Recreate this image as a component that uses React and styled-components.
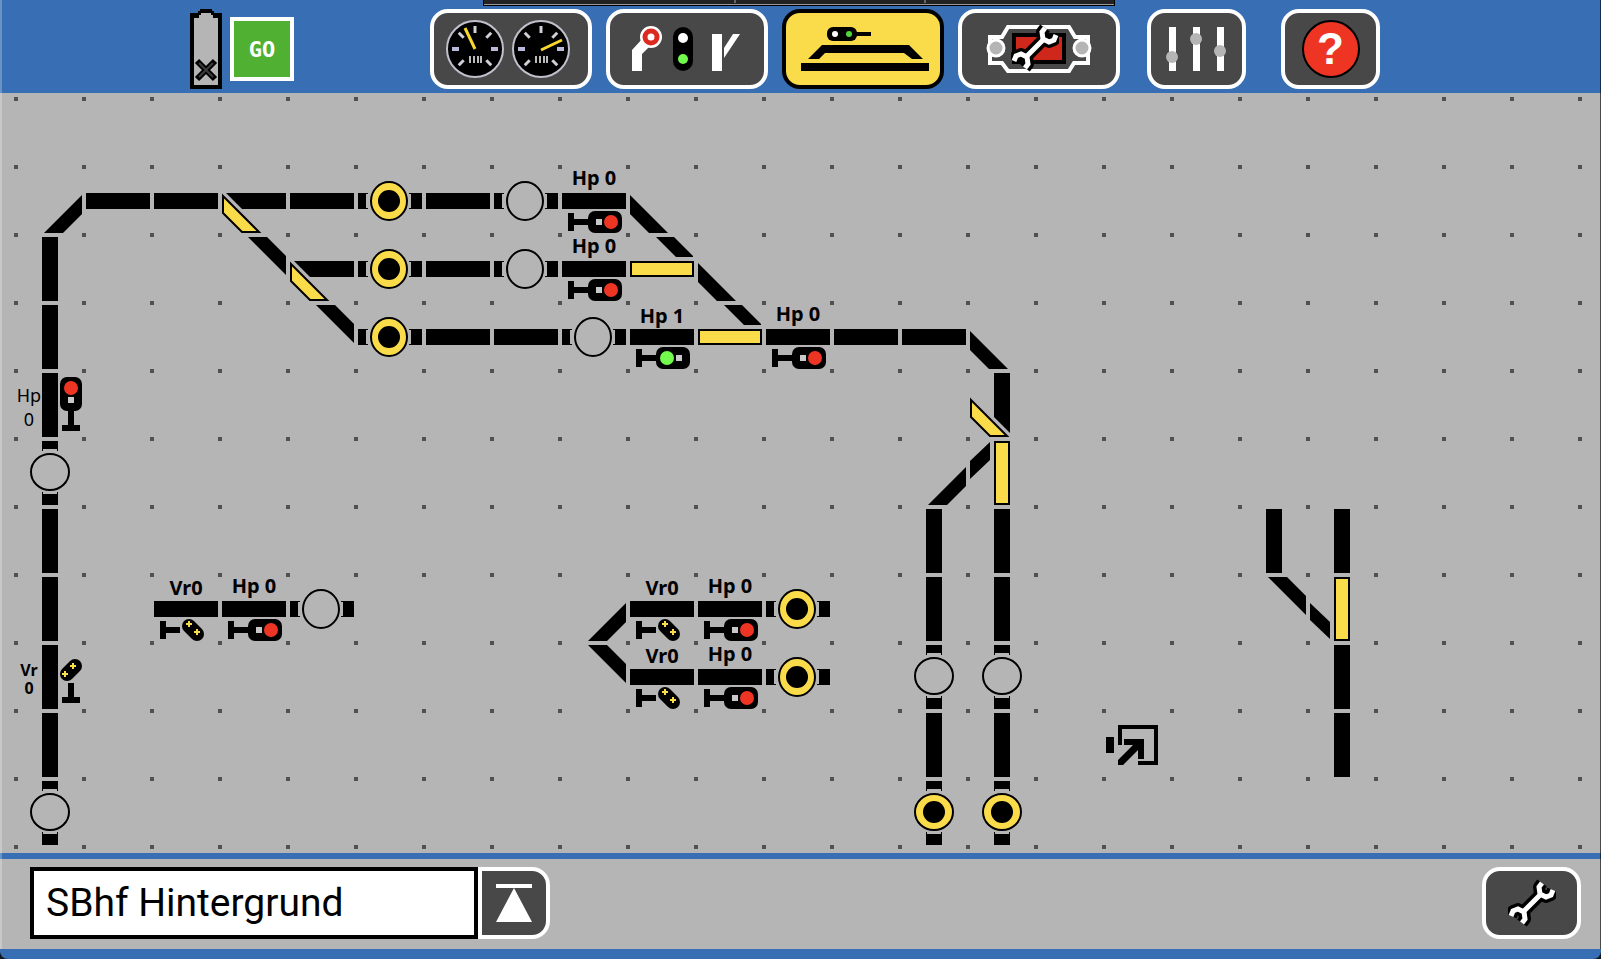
import React, { useState } from "react";
import styled, { createGlobalStyle, css } from "styled-components";

const BLUE = "#376eb4";
const GREY = "#b5b5b5";
const DARK = "#484848";
const YELLOW = "#fadb4a";
const RED = "#ee3524";
const GREEN = "#72fb4c";

const GlobalStyle = createGlobalStyle`
  * {
    box-sizing: border-box;
  }

  body {
    margin: 0;
    background: #14181e;
    font-family: "Noto Sans", sans-serif;
  }
`;

const Screen = styled.div`
  position: relative;
  display: flex;
  flex-direction: column;
  min-height: 100vh;
  overflow: hidden;
  background: ${GREY};
  border-bottom: 10px solid ${BLUE};
  border-radius: 0 0 8px 8px;

  &::after {
    content: "";
    position: absolute;
    inset: 0;
    border-left: 2px solid rgba(255, 255, 255, 0.25);
    border-right: 1px solid rgba(0, 0, 0, 0.6);
    pointer-events: none;
  }
`;

const TopBar = styled.header`
  display: flex;
  align-items: center;
  height: 93px;
  padding: 5px 0 0 190px;
  background: ${BLUE};
`;

const WindowEdge = styled.div`
  position: absolute;
  top: 0;
  left: 483px;
  display: flex;
  width: 632px;
  height: 6px;
  background: #222;
  border: 1px solid #000;
  border-top: none;
  box-shadow: inset 0 -1px 0 #999;
`;

const EdgePart = styled.span`
  flex: 0 0 ${({ $width }) => $width}px;
  height: 3px;
  border-right: 2px solid #666;
`;

const Status = styled.div`
  display: flex;
  align-items: center;
  gap: 8px;
  margin-right: 136px;
`;

const GoButton = styled.button`
  width: 64px;
  height: 64px;
  padding: 0;
  background: #50b031;
  border: 4px solid #fff;
  color: #fff;
  font-family: "DejaVu Sans Mono", monospace;
  font-size: 22px;
  font-weight: 700;
`;

const Tabs = styled.nav`
  display: flex;
  gap: 14px;
`;

const Tools = styled.div`
  display: flex;
  gap: 35px;
  margin-left: 27px;
`;

const IconButton = styled.button`
  display: flex;
  align-items: center;
  justify-content: center;
  width: ${({ $wide }) => ($wide ? 162 : 99)}px;
  height: ${({ $low }) => ($low ? 72 : 80)}px;
  padding: 0;
  background: ${DARK};
  border: 4px solid #fff;
  border-radius: 18px;
  cursor: pointer;

  ${({ $active }) =>
    $active &&
    css`
      background: ${YELLOW};
      border-color: #000;
    `}

  svg {
    display: block;
    flex: none;
  }
`;

const HelpMark = styled.span`
  display: flex;
  align-items: center;
  justify-content: center;
  width: 58px;
  height: 58px;
  background: ${RED};
  border: 2px solid #000;
  border-radius: 50%;
  color: #fff;
  font-size: 44px;
  font-weight: 600;
  line-height: 54px;
`;

// one grid cell is 68px, the dots sit on the cell corners
const Board = styled.main`
  display: grid;
  flex: 1;
  grid-template-columns: repeat(23, 68px);
  grid-auto-rows: 68px;
  padding: 6px 0 6px 16px;
  overflow: hidden;
  background: conic-gradient(from 270deg at 4px 4px, #505050 25%, transparent 0)
    14px 4px / 68px 68px ${GREY};
`;

const CellBox = styled.div`
  position: relative;
  grid-column: ${({ $col }) => $col + 1};
  grid-row: ${({ $row }) => $row + 1};

  svg {
    display: block;
  }
`;

const CellButton = styled(CellBox).attrs({ as: "button", type: "button" })`
  padding: 0;
  background: none;
  border: none;
  color: #000;
  cursor: pointer;
`;

const Label = styled.span`
  position: absolute;
  top: ${({ $low }) => ($low ? 2 : 0)}px;
  left: 0;
  width: 68px;
  font-family: "Noto Sans", sans-serif;
  font-size: 20px;
  font-weight: 700;
  line-height: 22px;
  text-align: center;
  white-space: nowrap;
`;

const SideLabel = styled.span`
  position: absolute;
  top: ${({ $bold }) => ($bold ? 18 : 12)}px;
  left: 0;
  width: 26px;
  font-family: "Noto Sans", sans-serif;
  font-size: ${({ $bold }) => ($bold ? 16 : 18)}px;
  font-weight: ${({ $bold }) => ($bold ? 700 : 400)};
  line-height: ${({ $bold }) => ($bold ? 18 : 24)}px;
  text-align: center;
`;

const BottomBar = styled.footer`
  display: flex;
  align-items: center;
  height: 96px;
  padding: 0 20px 2px 30px;
  border-top: 6px solid ${BLUE};
`;

const NameInput = styled.input`
  width: 448px;
  height: 72px;
  padding: 0 12px;
  background: #fff;
  border: 4px solid #000;
  border-radius: 0;
  color: #000;
  font-family: Roboto, sans-serif;
  font-size: 39px;
  outline: none;
`;

const UpButton = styled(IconButton)`
  width: 72px;
  border-radius: 0 18px 18px 0;
`;

const ToolButton = styled(IconButton)`
  margin-left: auto;
`;

const Wrench = ({ x, y, size = 48 }) => {
  const head = "M34 4L31 8L32 15L38 18L43 16L45 11";
  const foot = "M14 44L17 40L16 33L10 30L5 32L3 37";
  return (
    <svg x={x} y={y} width={size} height={size} viewBox="0 0 48 48" fill="none">
      <g stroke="#000" strokeWidth="12" strokeLinejoin="round">
        <path d="M33 15L15 33" />
        <path d={head} />
        <path d={foot} />
      </g>
      <g stroke="#fff" strokeWidth="5">
        <path d="M34 14L14 34" />
        <path d={head} />
        <path d={foot} />
      </g>
    </svg>
  );
};

const BatteryIcon = () => (
  <svg width="32" height="80" viewBox="0 0 32 80">
    <path d="M10 0H22V2H24V4H32V80H0V4H8V2H10Z" fill="#000" />
    <path d="M11 4H21V6H23V9H28V76H4V9H9V6H11Z" fill={GREY} />
    <path d="M7 52L25 70M25 52L7 70" stroke="#000" strokeWidth="6" />
    <path d="M9 54L23 68M23 54L9 68" stroke="#3c3c3c" strokeWidth="2" />
  </svg>
);

const Gauge = ({ x, needle }) => (
  <g transform={`translate(${x} 40)`}>
    <circle r="28" fill="#000" stroke="#c0c0cc" strokeWidth="2" />
    {[-135, -45, 0, 45, 135].map((angle) => (
      <path
        key={angle}
        d="M0 -23V-16"
        stroke="#cfcfd8"
        strokeWidth="3"
        transform={`rotate(${angle})`}
      />
    ))}
    <path d="M-23 0H-16M16 0H23" stroke="#b9b9dc" strokeWidth="4" />
    <path d="M-5 7V14M-1 7V14M3 7V14M6 7V14" stroke="#bbb" strokeWidth="2" />
    <path d={needle} stroke="#f8d82c" strokeWidth="3" />
  </g>
);

const GaugesIcon = () => (
  <svg width="154" height="72" viewBox="4 4 154 72">
    <Gauge x={45} needle="M0 0L-10 -21" />
    <Gauge x={111} needle="M0 1L21 -9" />
  </svg>
);

const SignalsIcon = () => (
  <svg width="154" height="72" viewBox="4 4 154 72">
    <path d="M26 62V41L38 28L45 36L36 45V62Z" fill="#fff" />
    <circle cx="45" cy="28" r="11" fill="#fff" />
    <circle cx="45" cy="28" r="6" fill="none" stroke="#dd2a20" strokeWidth="5" />
    <rect x="67" y="18" width="20" height="44" rx="10" fill="#000" />
    <circle cx="77" cy="29" r="5" fill="#fff" />
    <circle cx="77" cy="50" r="5" fill={GREEN} />
    <path d="M106 25H116V62H106ZM127 25H134L118 49V39Z" fill="#fff" />
  </svg>
);

const LayoutIcon = () => (
  <svg width="154" height="72" viewBox="4 4 154 72">
    <rect x="45" y="18" width="30" height="14" rx="6" fill="#000" />
    <path d="M74 25H89" stroke="#000" strokeWidth="4" />
    <circle cx="53" cy="25" r="3" fill="#fff" />
    <circle cx="67" cy="25" r="3" fill="#4fd63c" />
    <path d="M26 50L40 36H127L141 50H130L122 44H43L37 50Z" fill="#000" />
    <rect x="19" y="54" width="128" height="8" fill="#000" />
  </svg>
);

const LocoIcon = () => (
  <svg width="154" height="72" viewBox="4 4 154 72">
    <path
      d="M50 18H111L117 28H130V54H116L111 62H50L44 54H32V28H44Z"
      fill={DARK}
      stroke="#fff"
      strokeWidth="4"
    />
    <circle cx="38" cy="39" r="8" fill={GREY} stroke="#fff" strokeWidth="3" />
    <circle cx="124" cy="39" r="8" fill={GREY} stroke="#fff" strokeWidth="3" />
    <rect x="56" y="26" width="50" height="27" fill="#cf271c" stroke="#000" strokeWidth="4" />
    <Wrench x={53} y={15} />
  </svg>
);

const SlidersIcon = () => (
  <svg width="91" height="72" viewBox="4 4 91 72">
    <path d="M22 18H29V62H22ZM46 18H53V62H46ZM70 18H77V62H70Z" fill="#fff" />
    <circle cx="25" cy="48" r="6" fill={GREY} />
    <circle cx="49" cy="30" r="6" fill={GREY} />
    <circle cx="73" cy="42" r="6" fill={GREY} />
  </svg>
);

const TopIcon = () => (
  <svg width="36" height="38" viewBox="0 0 36 38">
    <path d="M0 0H36V4H0ZM18 4L36 38H0Z" fill="#fff" />
  </svg>
);

const Art = ({ children }) => (
  <svg width="68" height="68" viewBox="0 0 68 68" aria-hidden="true">
    {children}
  </svg>
);

const TRACKS = {
  h: "M2 26H66V42H2Z",
  v: "M26 2H42V66H26Z",
  se: "M66 28V47L47 66H28Z",
  ne: "M28 2H47L66 21V40Z",
  sw: "M2 28L40 66H21L2 47Z",
};

// rail: fixed part in black, blade: the set direction in yellow
const TURNOUTS = {
  rightDiag: { rail: "M6 26H66V42H22Z", blade: "M3 29L39 65H22L3 46Z" },
  downDiag: { rail: "M26 2H42V62L26 46Z", blade: "M3 29L39 65H22L3 46Z" },
  rightBar: { rail: "M28 2H46L65 21V22H48Z", blade: "M3 27H65V41H3Z" },
  upBar: { rail: "M22 3V21L2 40V22Z", blade: "M27 3H41V65H27Z" },
  downBar: { rail: "M2 28L22 47V64L2 45Z", blade: "M27 3H41V65H27Z" },
};

const Track = ({ col, row, kind }) => (
  <CellBox $col={col} $row={row}>
    <Art>
      <path d={TRACKS[kind]} />
    </Art>
  </CellBox>
);

const Turnout = ({ col, row, kind }) => (
  <CellButton $col={col} $row={row} aria-label="Turnout">
    <Art>
      <path d={TURNOUTS[kind].rail} />
      <path d={TURNOUTS[kind].blade} fill={YELLOW} stroke="#000" strokeWidth="2" />
    </Art>
  </CellButton>
);

const Contact = ({ col, row, vertical, on }) => {
  const [cx, cy, rx, ry] = vertical ? [34, 33, 19, 18] : [33, 34, 18, 19];
  return (
    <CellButton $col={col} $row={row} aria-label="Route button">
      <Art>
        {vertical ? (
          <path d="M26 2H42V12H41V10H27V12H26ZM26 66H42V53H41V55H27V53H26Z" />
        ) : (
          <path d="M2 26H12V27H10V41H12V42H2ZM66 26H53V27H55V41H53V42H66Z" />
        )}
        <ellipse
          cx={cx}
          cy={cy}
          rx={rx}
          ry={ry}
          fill={on ? YELLOW : "none"}
          stroke="#000"
          strokeWidth="2"
        />
        {on && <circle cx={cx} cy={cy} r="11" />}
      </Art>
    </CellButton>
  );
};

const MainSignal = ({ col, row, aspect = "0" }) => (
  <CellButton $col={col} $row={row}>
    <Art>
      <path d={TRACKS.h} />
      <path d="M8 46H14V52H30V58H14V64H8Z" />
      <rect x="28" y="44" width="34" height="22" rx="7" />
      <rect x={aspect === "1" ? 48 : 36} y="52" width="6" height="6" fill="#c8c8c8" />
      <circle
        cx={aspect === "1" ? 39 : 51}
        cy="55"
        r="7"
        fill={aspect === "1" ? GREEN : RED}
      />
    </Art>
    <Label $low={aspect === "1"}>Hp {aspect}</Label>
  </CellButton>
);

const DistantSignal = ({ col, row }) => (
  <CellButton $col={col} $row={row}>
    <Art>
      <path d={TRACKS.h} />
      <path d="M8 46H14V52H28V58H14V64H8Z" />
      <path d="M37 51L45 59" stroke="#000" strokeWidth="14" strokeLinecap="round" />
      <path d="M34 49H40M37 46V52M42 57H48M45 54V60" stroke={YELLOW} strokeWidth="2" />
    </Art>
    <Label $low>Vr0</Label>
  </CellButton>
);

const MainSignalUp = ({ col, row }) => (
  <CellButton $col={col} $row={row}>
    <Art>
      <path d={TRACKS.v} />
      <rect x="44" y="6" width="22" height="34" rx="7" />
      <path d="M52 39H58V54H64V60H46V54H52Z" />
      <rect x="52" y="26" width="6" height="6" fill="#c8c8c8" />
      <circle cx="55" cy="17" r="7" fill={RED} />
    </Art>
    <SideLabel>Hp 0</SideLabel>
  </CellButton>
);

const DistantSignalUp = ({ col, row }) => (
  <CellButton $col={col} $row={row}>
    <Art>
      <path d={TRACKS.v} />
      <path d="M52 40H58V54H64V60H46V54H52Z" />
      <path d="M51 31L59 23" stroke="#000" strokeWidth="14" strokeLinecap="round" />
      <path d="M54 23H60M57 20V26M46 31H52M49 28V34" stroke={YELLOW} strokeWidth="2" />
    </Art>
    <SideLabel $bold>Vr 0</SideLabel>
  </CellButton>
);

const PageLink = ({ col, row }) => (
  <CellButton $col={col} $row={row} aria-label="Open linked page">
    <Art>
      <path d="M2 26H10V42H2Z" />
      <path d="M14 34V14H54V54H34V50H50V18H18V34Z" />
      <path d="M20 28H40V48H34V39L19 54H14V49L29 34H20Z" />
    </Art>
  </CellButton>
);

const tracks = [
  // upper line
  ["se", 0, 1], ["h", 1, 1], ["h", 2, 1], ["h", 4, 1], ["h", 6, 1], ["sw", 9, 1],
  ["ne", 3, 2], ["h", 6, 2], ["sw", 10, 2],
  ["ne", 4, 3], ["h", 6, 3], ["h", 7, 3], ["h", 12, 3], ["h", 13, 3], ["sw", 14, 3],
  // left side
  ["v", 0, 2], ["v", 0, 3], ["v", 0, 6], ["v", 0, 7], ["v", 0, 9],
  // two sidings going down
  ["se", 13, 5], ["v", 13, 6], ["v", 14, 6], ["v", 13, 7], ["v", 14, 7],
  ["v", 13, 9], ["v", 14, 9],
  // middle
  ["se", 8, 7], ["ne", 8, 8],
  // right side
  ["v", 18, 6], ["v", 19, 6], ["ne", 18, 7], ["v", 19, 8], ["v", 19, 9],
];

const turnouts = [
  ["rightDiag", 3, 1], ["rightDiag", 4, 2], ["rightBar", 9, 2], ["rightBar", 10, 3],
  ["downDiag", 14, 4], ["upBar", 14, 5], ["downBar", 19, 7],
];

const contacts = [
  { col: 5, row: 1, on: true }, { col: 7, row: 1 },
  { col: 5, row: 2, on: true }, { col: 7, row: 2 },
  { col: 5, row: 3, on: true }, { col: 8, row: 3 },
  { col: 0, row: 5, vertical: true }, { col: 0, row: 10, vertical: true },
  { col: 4, row: 7 },
  { col: 11, row: 7, on: true }, { col: 11, row: 8, on: true },
  { col: 13, row: 8, vertical: true }, { col: 14, row: 8, vertical: true },
  { col: 13, row: 10, vertical: true, on: true },
  { col: 14, row: 10, vertical: true, on: true },
];

const mainSignals = [
  [8, 1, "0"], [8, 2, "0"], [9, 3, "1"], [11, 3, "0"], [3, 7, "0"], [10, 7, "0"], [10, 8, "0"],
];

const distantSignals = [[2, 7], [9, 7], [9, 8]];

const tabs = [
  { id: "drive", title: "Drive", Icon: GaugesIcon },
  { id: "signals", title: "Signals and turnouts", Icon: SignalsIcon },
  { id: "layout", title: "Track layout", Icon: LayoutIcon },
  { id: "loco", title: "Edit locomotive", Icon: LocoIcon },
];

const App = () => {
  const [tab, setTab] = useState("layout");
  const [name, setName] = useState("SBhf Hintergrund");

  return (
    <>
      <GlobalStyle />
      <Screen>
        <TopBar>
          <WindowEdge>
            <EdgePart $width={252} />
            <EdgePart $width={190} />
          </WindowEdge>
          <Status>
            <BatteryIcon />
            <GoButton>GO</GoButton>
          </Status>
          <Tabs>
            {tabs.map(({ id, title, Icon }) => (
              <IconButton
                key={id}
                $wide
                $active={tab === id}
                aria-label={title}
                onClick={() => setTab(id)}
              >
                <Icon />
              </IconButton>
            ))}
          </Tabs>
          <Tools>
            <IconButton aria-label="Settings">
              <SlidersIcon />
            </IconButton>
            <IconButton aria-label="Help">
              <HelpMark>?</HelpMark>
            </IconButton>
          </Tools>
        </TopBar>

        <Board>
          {tracks.map(([kind, col, row]) => (
            <Track key={`${col}-${row}`} kind={kind} col={col} row={row} />
          ))}
          {turnouts.map(([kind, col, row]) => (
            <Turnout key={`${col}-${row}`} kind={kind} col={col} row={row} />
          ))}
          {contacts.map((contact) => (
            <Contact key={`${contact.col}-${contact.row}`} {...contact} />
          ))}
          {mainSignals.map(([col, row, aspect]) => (
            <MainSignal key={`${col}-${row}`} col={col} row={row} aspect={aspect} />
          ))}
          {distantSignals.map(([col, row]) => (
            <DistantSignal key={`${col}-${row}`} col={col} row={row} />
          ))}
          <MainSignalUp col={0} row={4} />
          <DistantSignalUp col={0} row={8} />
          <PageLink col={16} row={9} />
        </Board>

        <BottomBar>
          <NameInput
            aria-label="Page name"
            value={name}
            onChange={(e) => setName(e.target.value)}
          />
          <UpButton $low aria-label="Page list">
            <TopIcon />
          </UpButton>
          <ToolButton $low aria-label="Edit page">
            <Wrench />
          </ToolButton>
        </BottomBar>
      </Screen>
    </>
  );
};

export default App;
